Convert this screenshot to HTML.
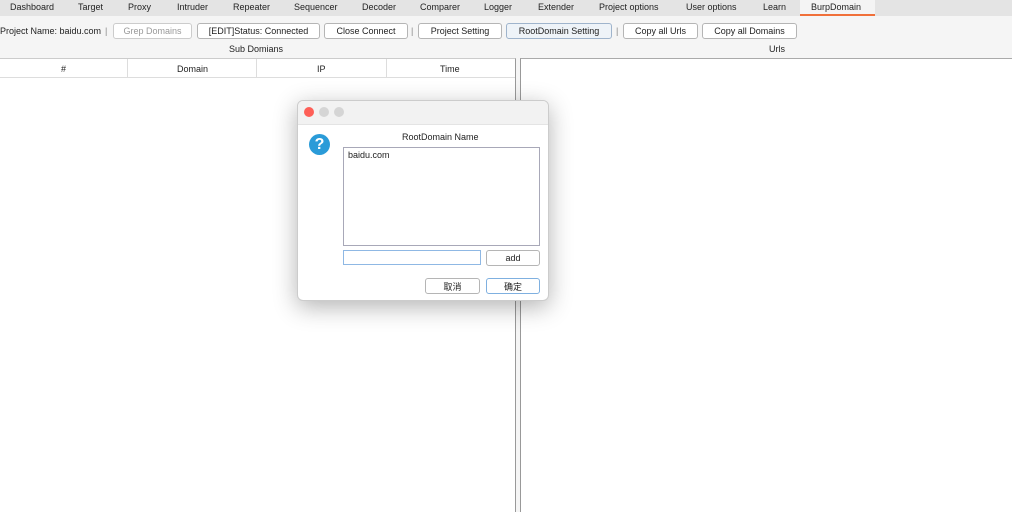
<!DOCTYPE html>
<html><head><meta charset="utf-8"><style>
*{margin:0;padding:0;box-sizing:border-box}
body{width:1012px;height:512px;background:#f5f5f5;font-family:"Liberation Sans","Noto Sans CJK SC",sans-serif;font-size:9px;color:#222;position:relative;overflow:hidden}
.a{position:absolute;white-space:nowrap}
.tabs{position:absolute;left:0;top:0;width:1012px;height:16px;background:#e4e4e4}
.btn{position:absolute;top:23px;height:16px;border:1px solid #b5b5b5;border-radius:3px;background:#fff;display:flex;align-items:center;justify-content:center;font-size:9px;white-space:nowrap}
</style></head><body>
<div class="tabs"></div>
<div class="a" style="left:800px;top:0;width:75px;height:16px;background:#f4f4f4;border-bottom:2px solid #f0703a"></div>
<div class="a" style="top:2px;left:10px">Dashboard</div>
<div class="a" style="top:2px;left:78px">Target</div>
<div class="a" style="top:2px;left:128px">Proxy</div>
<div class="a" style="top:2px;left:177px">Intruder</div>
<div class="a" style="top:2px;left:233px">Repeater</div>
<div class="a" style="top:2px;left:294px">Sequencer</div>
<div class="a" style="top:2px;left:362px">Decoder</div>
<div class="a" style="top:2px;left:420px">Comparer</div>
<div class="a" style="top:2px;left:484px">Logger</div>
<div class="a" style="top:2px;left:538px">Extender</div>
<div class="a" style="top:2px;left:599px">Project options</div>
<div class="a" style="top:2px;left:686px">User options</div>
<div class="a" style="top:2px;left:763px">Learn</div>
<div class="a" style="top:2px;left:811px">BurpDomain</div>

<div class="a" style="top:26px;left:0">Project Name: baidu.com</div>
<div class="a" style="top:26px;left:105px;color:#888">|</div>
<div class="btn" style="left:113px;width:79px;color:#999;border-color:#ccc">Grep Domains</div>
<div class="btn" style="left:197px;width:123px">[EDIT]Status: Connected</div>
<div class="btn" style="left:324px;width:84px">Close Connect</div>
<div class="a" style="top:26px;left:411px;color:#888">|</div>
<div class="btn" style="left:418px;width:84px">Project Setting</div>
<div class="btn" style="left:506px;width:106px;background:#eef3f8;border-color:#9fb4cc">RootDomain Setting</div>
<div class="a" style="top:26px;left:616px;color:#888">|</div>
<div class="btn" style="left:623px;width:75px">Copy all Urls</div>
<div class="btn" style="left:702px;width:95px">Copy all Domains</div>

<div class="a" style="top:44px;left:229px">Sub Domians</div>
<div class="a" style="top:44px;left:769px">Urls</div>

<div class="a" style="left:0;top:58px;width:516px;height:454px;background:#fff;border-right:1px solid #999;border-top:1px solid #ccc"></div>
<div class="a" style="left:0;top:59px;width:515px;height:19px;border-bottom:1px solid #ddd"></div>
<div class="a" style="left:127px;top:59px;width:1px;height:19px;background:#ddd"></div>
<div class="a" style="left:256px;top:59px;width:1px;height:19px;background:#ddd"></div>
<div class="a" style="left:386px;top:59px;width:1px;height:19px;background:#ddd"></div>
<div class="a" style="top:64px;left:61px">#</div>
<div class="a" style="top:64px;left:177px">Domain</div>
<div class="a" style="top:64px;left:317px">IP</div>
<div class="a" style="top:64px;left:440px">Time</div>
<div class="a" style="left:520px;top:58px;width:492px;height:454px;background:#fff;border-left:1px solid #999;border-top:1px solid #aaa"></div>

<div class="a" style="left:297px;top:100px;width:252px;height:201px;background:#fff;border:1px solid #ccc;border-radius:6px;box-shadow:0 6px 24px rgba(0,0,0,.3);overflow:hidden">
 <div style="height:24px;background:#f2f2f2;border-bottom:1px solid #e4e4e4;position:relative">
  <div class="a" style="left:6px;top:6px;width:10px;height:10px;border-radius:50%;background:#fe5f57"></div>
  <div class="a" style="left:21px;top:6px;width:10px;height:10px;border-radius:50%;background:#d5d5d5"></div>
  <div class="a" style="left:36px;top:6px;width:10px;height:10px;border-radius:50%;background:#d5d5d5"></div>
 </div>
 <div class="a" style="left:11px;top:33px;width:21px;height:21px;border-radius:50%;background:#2a9bd8;color:#fff;font-weight:bold;font-size:16px;text-align:center;line-height:21px">?</div>
 <div class="a" style="left:104px;top:31px">RootDomain Name</div>
 <div class="a" style="left:45px;top:46px;width:197px;height:99px;border:1px solid #a8a8b8;padding:2px 4px">baidu.com</div>
 <div class="a" style="left:45px;top:149px;width:138px;height:15px;border:1px solid #8fb8e4"></div>
 <div class="btn" style="left:188px;top:149px;width:54px;height:16px">add</div>
 <div class="btn" style="left:127px;top:177px;width:55px;height:16px">取消</div>
 <div class="btn" style="left:188px;top:177px;width:54px;height:16px;border-color:#7fb0e0">确定</div>
</div>
</body></html>
